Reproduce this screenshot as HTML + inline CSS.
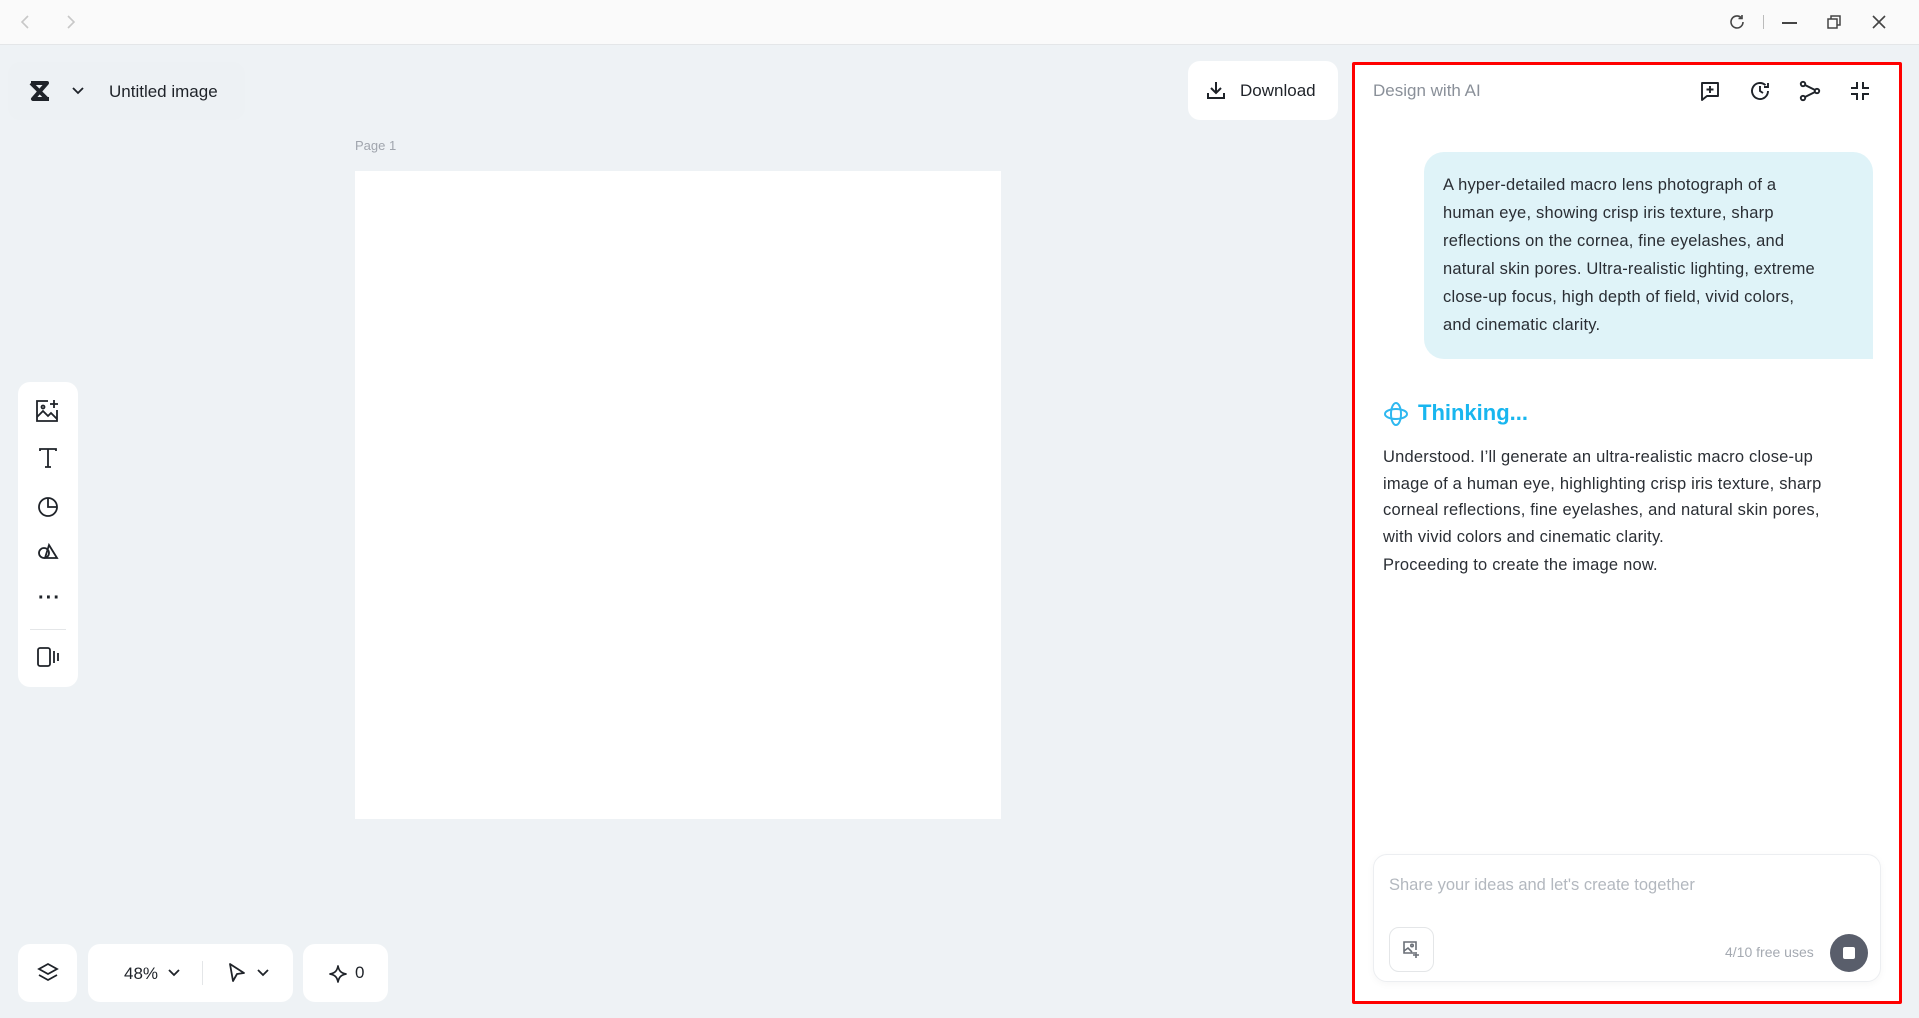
<!DOCTYPE html>
<html><head><meta charset="utf-8"><style>
*{box-sizing:border-box;margin:0;padding:0}
body{width:1919px;height:1018px;background:#eef2f5;font-family:"Liberation Sans",sans-serif;position:relative;overflow:hidden;color:#1f2329}
.abs{position:absolute}
.card{position:absolute;background:#fff;border-radius:12px}
svg{display:block}
.nw{white-space:nowrap}
</style></head><body>
<div class="abs" style="left:0;top:0;width:1919px;height:45px;background:#fafafa;border-bottom:1px solid #e4e6e8"></div>
<svg class="abs" style="left:18px;top:13px" width="16" height="18" viewBox="0 0 16 18"><path d="M10 3L4 9l6 6" stroke="#c8c8c8" stroke-width="1.6" fill="none"/></svg>
<svg class="abs" style="left:62px;top:13px" width="16" height="18" viewBox="0 0 16 18"><path d="M6 3l6 6-6 6" stroke="#c8c8c8" stroke-width="1.6" fill="none"/></svg>
<svg class="abs" style="left:1728px;top:13px" width="18" height="18" viewBox="0 0 18 18"><path d="M15 9a6 6 0 1 1-2-4.5M14 2v3.5h-3.5" stroke="#444" stroke-width="1.6" fill="none"/></svg>
<div class="abs" style="left:1763px;top:15px;width:1px;height:14px;background:#bbb"></div>
<div class="abs" style="left:1782px;top:22px;width:15px;height:1.6px;background:#444"></div>
<svg class="abs" style="left:1826px;top:14px" width="16" height="16" viewBox="0 0 16 16"><path d="M2 5h9v9H2zM5 5V2h9v9h-3" stroke="#444" stroke-width="1.5" fill="none"/></svg>
<svg class="abs" style="left:1871px;top:14px" width="16" height="16" viewBox="0 0 16 16"><path d="M2 2l12 12M14 2L2 14" stroke="#444" stroke-width="1.6"/></svg>

<div class="abs" style="left:8px;top:62px;width:237px;height:58px;background:#edf1f4;border-radius:12px"></div>
<svg class="abs" style="left:28px;top:80px" width="26" height="22" viewBox="0 0 26 22"><path d="M3 3h16L5 19h16" stroke="#1f2329" stroke-width="4" fill="none" stroke-linejoin="round"/><path d="M3 3l16 16" stroke="#1f2329" stroke-width="4"/></svg>
<svg class="abs" style="left:72px;top:86px" width="12" height="10" viewBox="0 0 12 10"><path d="M1 2l5 5 5-5" stroke="#1f2329" stroke-width="1.8" fill="none"/></svg>
<div class="abs" style="left:109px;top:82px;font-size:17px;color:#1f2329">Untitled image</div>

<div class="card" style="left:1188px;top:61px;width:150px;height:59px"></div>
<svg class="abs" style="left:1206px;top:80px" width="20" height="20" viewBox="0 0 20 20"><path d="M10 2v11M5 8l5 5 5-5M2 13v5h16v-5" stroke="#1f2329" stroke-width="2" fill="none"/></svg>
<div class="abs" style="left:1240px;top:81px;font-size:17px">Download</div>

<div class="abs" style="left:355px;top:138px;font-size:13px;color:#a0a5ad">Page 1</div>
<div class="abs" style="left:355px;top:171px;width:646px;height:648px;background:#fff"></div>

<div class="card" style="left:18px;top:382px;width:60px;height:305px"></div>
<svg class="abs" style="left:34px;top:398px" width="26" height="26" viewBox="0 0 26 26" fill="none" stroke="#1f2329" stroke-width="1.8"><path d="M14 3H3v20h20V12"/><path d="M3 19l6-6 5 5 3-3 6 6"/><circle cx="9" cy="9" r="1.5"/><path d="M20 2v8M16 6h8"/></svg>
<svg class="abs" style="left:37px;top:447px" width="22" height="22" viewBox="0 0 22 22" fill="none" stroke="#1f2329" stroke-width="1.8"><path d="M3 4V2h16v2M11 2v18M8 20h6"/></svg>
<svg class="abs" style="left:37px;top:495px" width="22" height="22" viewBox="0 0 22 22" fill="none" stroke="#1f2329" stroke-width="1.8"><circle cx="11" cy="12" r="9"/><path d="M11 3v9h9"/></svg>
<svg class="abs" style="left:36px;top:541px" width="24" height="24" viewBox="0 0 24 24" fill="none" stroke="#1f2329" stroke-width="1.8"><circle cx="8" cy="12" r="5"/><path d="M13 4l8 13H9z"/></svg>
<div class="abs" style="left:38px;top:588px;font-size:20px;letter-spacing:1px;font-weight:bold;line-height:20px">···</div>
<div class="abs" style="left:30px;top:629px;width:36px;height:1px;background:#e4e6e8"></div>
<svg class="abs" style="left:36px;top:645px" width="24" height="24" viewBox="0 0 24 24" fill="none" stroke="#1f2329" stroke-width="1.8"><rect x="2" y="3" width="12" height="18" rx="2"/><path d="M18 6v12M22 8v8"/></svg>

<div class="card" style="left:18px;top:944px;width:59px;height:58px"></div>
<svg class="abs" style="left:36px;top:961px" width="24" height="24" viewBox="0 0 24 24" fill="none" stroke="#1f2329" stroke-width="1.8"><path d="M12 3l9 5-9 5-9-5z"/><path d="M3 14l9 5 9-5"/></svg>
<div class="card" style="left:88px;top:944px;width:205px;height:58px"></div>
<div class="abs" style="left:124px;top:964px;font-size:17px">48%</div>
<svg class="abs" style="left:168px;top:968px" width="12" height="10" viewBox="0 0 12 10"><path d="M1 2l5 5 5-5" stroke="#1f2329" stroke-width="1.8" fill="none"/></svg>
<div class="abs" style="left:202px;top:961px;width:1px;height:24px;background:#e4e6e8"></div>
<svg class="abs" style="left:226px;top:962px" width="22" height="22" viewBox="0 0 22 22"><path d="M4 2l14 9-7 1-4 7z" stroke="#1f2329" stroke-width="1.8" fill="none" stroke-linejoin="round"/></svg>
<svg class="abs" style="left:257px;top:968px" width="12" height="10" viewBox="0 0 12 10"><path d="M1 2l5 5 5-5" stroke="#1f2329" stroke-width="1.8" fill="none"/></svg>
<div class="card" style="left:303px;top:944px;width:85px;height:58px"></div>
<svg class="abs" style="left:328px;top:964px" width="20" height="20" viewBox="0 0 20 20"><path d="M10 2c1 5 3 7 8 8-5 1-7 3-8 8-1-5-3-7-8-8 5-1 7-3 8-8z" stroke="#1f2329" stroke-width="1.7" fill="none" stroke-linejoin="round"/></svg>
<div class="abs" style="left:355px;top:963px;font-size:17px">0</div>

<div class="abs" style="left:1352px;top:62px;width:550px;height:942px;background:#fff;border:3px solid #f00;border-radius:2px"></div>
<div class="abs" style="left:1373px;top:81px;font-size:17px;color:#8a9099">Design with AI</div>
<svg class="abs" style="left:1699px;top:80px" width="22" height="22" viewBox="0 0 22 22" fill="none" stroke="#1f2329" stroke-width="1.9"><path d="M3 3h16v13H8l-5 4z" stroke-linejoin="round"/><path d="M11 6v7M7.5 9.5h7"/></svg>
<svg class="abs" style="left:1749px;top:80px" width="22" height="22" viewBox="0 0 22 22" fill="none" stroke="#1f2329" stroke-width="1.9"><path d="M19 11a8 8 0 1 1-2.5-5.8M19 3v4h-4"/><path d="M11 6v5l3 2"/></svg>
<svg class="abs" style="left:1799px;top:80px" width="22" height="22" viewBox="0 0 22 22" fill="none" stroke="#1f2329" stroke-width="1.9"><circle cx="4" cy="4" r="2.2"/><circle cx="4" cy="18" r="2.2"/><circle cx="18" cy="11" r="2.2"/><path d="M6 5l10 5M6 17l10-5"/></svg>
<svg class="abs" style="left:1849px;top:80px" width="22" height="22" viewBox="0 0 22 22" fill="none" stroke="#1f2329" stroke-width="2"><path d="M8 2v6H2M14 2v6h6M8 20v-6H2M14 20v-6h6"/></svg>

<div class="abs" style="left:1424px;top:152px;width:449px;height:207px;background:#dff3f8;border-radius:20px 20px 0 20px"></div>
<div class="abs nw" style="left:1443px;top:171px;font-size:16.5px;line-height:28px;color:#2a2e34;letter-spacing:0.2px">A hyper-detailed macro lens photograph of a<br>human eye, showing crisp iris texture, sharp<br>reflections on the cornea, fine eyelashes, and<br>natural skin pores. Ultra-realistic lighting, extreme<br>close-up focus, high depth of field, vivid colors,<br>and cinematic clarity.</div>

<svg class="abs" style="left:1382px;top:400px" width="28" height="28" viewBox="0 0 28 28" fill="none" stroke="#2fb8f0" stroke-width="2"><ellipse cx="14" cy="14" rx="11" ry="5"/><ellipse cx="14" cy="14" rx="5" ry="11"/></svg>
<div class="abs" style="left:1418px;top:400px;font-size:22px;font-weight:bold;color:#18b6ef">Thinking...</div>
<div class="abs nw" style="left:1383px;top:444px;font-size:16.5px;line-height:26.5px;color:#2a2e34;letter-spacing:0.2px">Understood. I’ll generate an ultra-realistic macro close-up<br>image of a human eye, highlighting crisp iris texture, sharp<br>corneal reflections, fine eyelashes, and natural skin pores,<br>with vivid colors and cinematic clarity.</div>
<div class="abs nw" style="left:1383px;top:556px;font-size:16.5px;color:#2a2e34;letter-spacing:0.2px">Proceeding to create the image now.</div>

<div class="abs" style="left:1373px;top:854px;width:508px;height:128px;background:#fff;border:1px solid #eceef1;border-radius:14px;box-shadow:0 2px 8px rgba(0,0,0,.04)"></div>
<div class="abs" style="left:1389px;top:876px;font-size:16.5px;color:#b3b8bf">Share your ideas and let's create together</div>
<div class="abs" style="left:1389px;top:927px;width:45px;height:45px;border:1px solid #e4e6e8;border-radius:10px"></div>
<svg class="abs" style="left:1401px;top:939px" width="20" height="20" viewBox="0 0 20 20" fill="none" stroke="#6a6f77" stroke-width="1.6"><path d="M14 14H3V3h12v8"/><path d="M3 12l4-3 4 4"/><circle cx="11" cy="6.5" r="1.2"/><path d="M15 13v6M12 16h6"/></svg>
<div class="abs" style="left:1725px;top:944px;font-size:14px;color:#a5aab2">4/10 free uses</div>
<div class="abs" style="left:1830px;top:934px;width:38px;height:38px;border-radius:50%;background:#595e6b"></div>
<div class="abs" style="left:1843px;top:947px;width:12px;height:12px;border-radius:2px;background:#fff"></div>
</body></html>
